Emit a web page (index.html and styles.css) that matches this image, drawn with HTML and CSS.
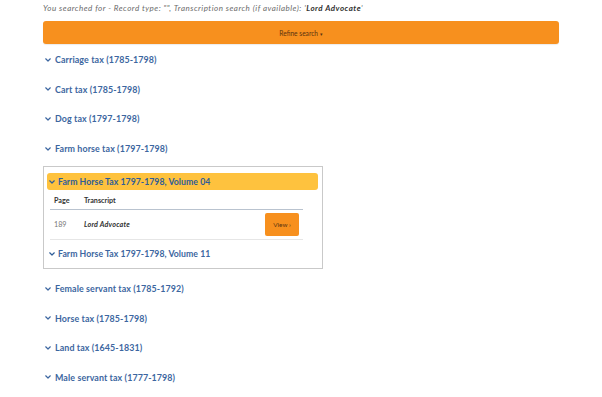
FILE: index.html
```html
<!DOCTYPE html>
<html lang="en">
<head>
<meta charset="utf-8">
<title>Search results</title>
<link rel="stylesheet" href="styles.css">
</head>
<body>
<main class="page">
  <p class="summary">You searched for - Record type: "", Transcription search (if available): '<b>Lord Advocate</b>'</p>
  <button class="refine" type="button">Refine search <span class="caret">▾</span></button>
  <ul class="tax-list">
    <li class="tax"><svg class="chev" viewBox="0 0 6 4"><path d="M0.7 0.8 L3 3 L5.3 0.8"/></svg>Carriage tax (1785-1798)</li>
    <li class="tax"><svg class="chev" viewBox="0 0 6 4"><path d="M0.7 0.8 L3 3 L5.3 0.8"/></svg>Cart tax (1785-1798)</li>
    <li class="tax"><svg class="chev" viewBox="0 0 6 4"><path d="M0.7 0.8 L3 3 L5.3 0.8"/></svg>Dog tax (1797-1798)</li>
    <li class="tax"><svg class="chev" viewBox="0 0 6 4"><path d="M0.7 0.8 L3 3 L5.3 0.8"/></svg>Farm horse tax (1797-1798)</li>
    <li class="volumes">
      <div class="vol-head open"><svg class="chev" viewBox="0 0 6 4"><path d="M0.7 0.8 L3 3 L5.3 0.8"/></svg>Farm Horse Tax 1797-1798, Volume 04</div>
      <table class="results">
        <thead>
          <tr><th class="c-page">Page</th><th>Transcript</th><th></th></tr>
        </thead>
        <tbody>
          <tr>
            <td class="c-page num">189</td>
            <td class="transcript">Lord Advocate</td>
            <td class="c-act"><button class="view" type="button">View ›</button></td>
          </tr>
        </tbody>
      </table>
      <div class="vol-head"><svg class="chev" viewBox="0 0 6 4"><path d="M0.7 0.8 L3 3 L5.3 0.8"/></svg>Farm Horse Tax 1797-1798, Volume 11</div>
    </li>
    <li class="tax"><svg class="chev" viewBox="0 0 6 4"><path d="M0.7 0.8 L3 3 L5.3 0.8"/></svg>Female servant tax (1785-1792)</li>
    <li class="tax"><svg class="chev" viewBox="0 0 6 4"><path d="M0.7 0.8 L3 3 L5.3 0.8"/></svg>Horse tax (1785-1798)</li>
    <li class="tax"><svg class="chev" viewBox="0 0 6 4"><path d="M0.7 0.8 L3 3 L5.3 0.8"/></svg>Land tax (1645-1831)</li>
    <li class="tax"><svg class="chev" viewBox="0 0 6 4"><path d="M0.7 0.8 L3 3 L5.3 0.8"/></svg>Male servant tax (1777-1798)</li>
  </ul>
</main>
</body>
</html>
```
FILE: styles.css
```css
* { box-sizing: border-box; }
html, body { margin: 0; padding: 0; background: #fff; }
body { font-family: Lato, "Noto Sans", sans-serif; color: #333; }

.page {
  width: 602px;
  padding: 2px 43px 0 43px;
}

.summary {
  margin: 0;
  height: 13px;
  line-height: 13px;
  font-size: 8px;
  letter-spacing: 0.5px;
  font-style: italic;
  color: #6a6a6a;
}
.summary b { color: #333; font-weight: 700; }

.refine {
  display: block;
  width: 516px;
  height: 23px;
  margin: 6px 0 0 0;
  border: 0;
  border-radius: 3px;
  background: #f7901e;
  font-family: Lato, "Noto Sans", sans-serif;
  font-size: 6.6px;
  color: #5a3310;
  box-shadow: 0 1px 1px rgba(0,0,0,0.08);
}
.caret { font-size: 5px; }

.tax-list {
  list-style: none;
  margin: 1px 0 0 0;
  padding: 0;
}

.tax {
  height: 29.6px;
  display: flex;
  align-items: center;
  padding-left: 2px;
  font-size: 8.9px;
  font-weight: 700;
  color: #3c66a0;
  letter-spacing: 0.1px;
}

.chev {
  width: 6px;
  height: 4px;
  margin-right: 4px;
  flex: none;
  fill: none;
  stroke: #3c66a0;
  stroke-width: 1.2;
  stroke-linecap: round;
  stroke-linejoin: round;
}

.volumes {
  width: 280px;
  margin: 3px 0 5px 0;
  padding: 6px 4px 0 3px;
  border: 1px solid #c9c9c9;
}

.vol-head {
  display: flex;
  align-items: center;
  height: 17px;
  padding-left: 2px;
  font-size: 8.7px;
  font-weight: 700;
  color: #2f5d98;
  letter-spacing: 0.05px;
}
.vol-head .chev { margin-right: 3px; stroke: #2f5d98; }
.vol-head.open {
  background: #fec23e;
  border-radius: 3px;
}
.vol-head:last-child {
  height: 28px;
  color: #3c66a0;
}

.results {
  width: 253px;
  margin-left: 3px;
  border-collapse: collapse;
  font-size: 7.2px;
}
.results th {
  height: 19px;
  padding: 2px 0 0 4px;
  text-align: left;
  font-weight: 700;
  color: #333;
  border-bottom: 1.5px solid #b9c3cf;
}
.results td {
  height: 30px;
  padding: 0 0 0 4px;
  border-bottom: 1px solid #e6e6e6;
}
.c-page { width: 30px; }
.num { color: #777; }
.transcript {
  font-weight: 700;
  font-style: italic;
  color: #333;
  letter-spacing: 0.2px;
}
.c-act { text-align: right; padding-right: 4px !important; }

.view {
  width: 34px;
  height: 23px;
  border: 0;
  border-radius: 2px;
  background: #f7901e;
  font-family: Lato, "Noto Sans", sans-serif;
  font-size: 6.4px;
  color: #5a3310;
  padding: 0;
  vertical-align: middle;
}
```
